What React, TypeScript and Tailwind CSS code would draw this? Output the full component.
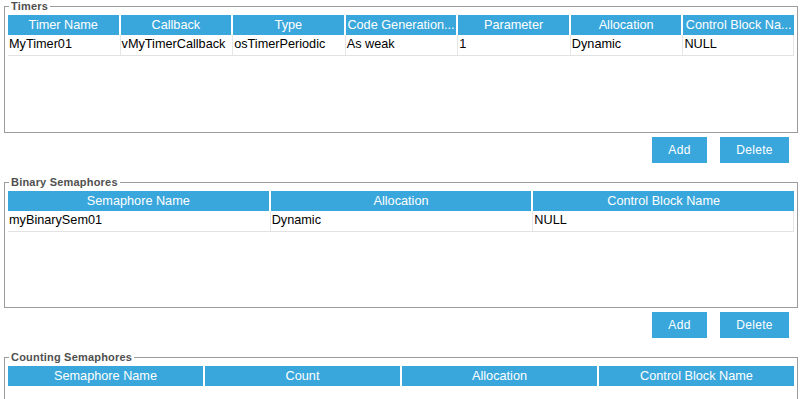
import React from "react";

const BLUE = "bg-[#3aa7dc]";

function Header({ cols, count }: { cols: string[]; count: number }) {
  const gridClass =
    count === 7 ? "grid-cols-7" : count === 3 ? "grid-cols-3" : "grid-cols-4";
  return (
    <div className={`grid ${gridClass} gap-x-[2px]`}>
      {cols.map((c, i) => (
        <div
          key={i}
          className={`${BLUE} h-[20px] flex items-center justify-center overflow-hidden whitespace-nowrap text-white text-[12.7px] leading-[20px] px-[1px]`}
        >
          {c}
        </div>
      ))}
    </div>
  );
}

function Row({ cells, count }: { cells: string[]; count: number }) {
  const gridClass =
    count === 7 ? "grid-cols-7" : count === 3 ? "grid-cols-3" : "grid-cols-4";
  return (
    <div
      className={`grid ${gridClass} gap-x-[2px] border-b border-[#e2e2e2]`}
    >
      {cells.map((c, i) => (
        <div
          key={i}
          className={`h-[20px] flex items-center overflow-hidden whitespace-nowrap text-black text-[12.7px] pl-[1px] ${
            i < cells.length - 1 ? "border-r border-[#e6e6e6] -mr-[2px]" : "border-r border-[#e6e6e6]"
          }`}
        >
          {c}
        </div>
      ))}
    </div>
  );
}

function Group({
  title,
  cols,
  rows,
  h,
}: {
  title: string;
  cols: string[];
  rows: string[][];
  h: string;
}) {
  return (
    <fieldset className={`ml-[4px] mr-[2px] ${h} border border-[#9b9b9b] px-[3px] pt-[2px] min-w-0`}>
      <legend className="ml-[1px] px-[2px] text-[11px] leading-[13px] font-bold text-[#505050] tracking-[0.2px]">
        {title}
      </legend>
      <Header cols={cols} count={cols.length} />
      {rows.map((r, i) => (
        <Row key={i} cells={r} count={cols.length} />
      ))}
    </fieldset>
  );
}

function Buttons() {
  return (
    <div className="flex justify-end gap-[13px] mt-[4px] mr-[11px]">
      <button
        className={`${BLUE} w-[55px] h-[26px] text-white text-[12px] tracking-[0.3px]`}
      >
        Add
      </button>
      <button
        className={`${BLUE} w-[69px] h-[26px] text-white text-[12px] tracking-[0.3px]`}
      >
        Delete
      </button>
    </div>
  );
}

export default function App() {
  return (
    <div
      className="w-[800px] h-[399px] overflow-hidden bg-white"
      style={{ fontFamily: '"Liberation Sans", Arial, sans-serif' }}
    >
      <Group
        h="h-[133px]"
        title="Timers"
        cols={[
          "Timer Name",
          "Callback",
          "Type",
          "Code Generation...",
          "Parameter",
          "Allocation",
          "Control Block Na...",
        ]}
        rows={[
          [
            "MyTimer01",
            "vMyTimerCallback",
            "osTimerPeriodic",
            "As weak",
            "1",
            "Dynamic",
            "NULL",
          ],
        ]}
      />
      <Buttons />
      <div className="mt-[13px]">
        <Group
          h="h-[132px]"
          title="Binary Semaphores"
          cols={["Semaphore Name", "Allocation", "Control Block Name"]}
          rows={[["myBinarySem01", "Dynamic", "NULL"]]}
        />
      </div>
      <Buttons />
      <div className="mt-[13px]">
        <Group
          h="h-[133px]"
          title="Counting Semaphores"
          cols={["Semaphore Name", "Count", "Allocation", "Control Block Name"]}
          rows={[]}
        />
      </div>
    </div>
  );
}
